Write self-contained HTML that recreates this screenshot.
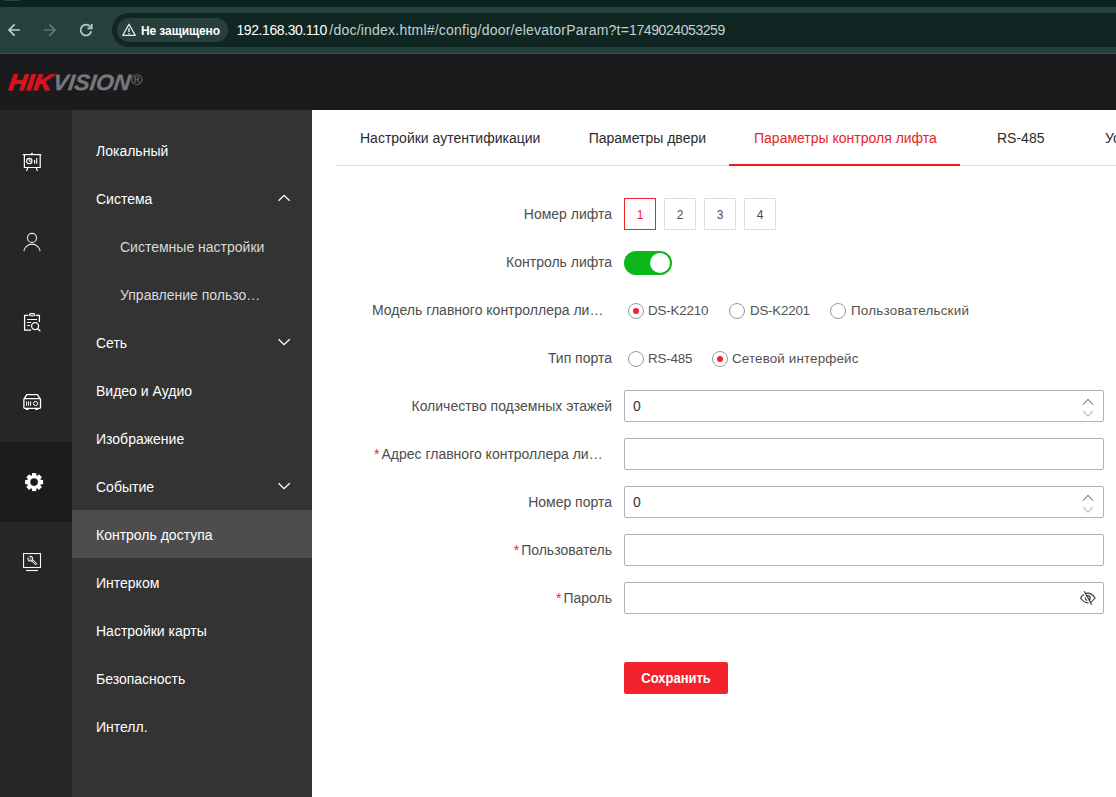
<!DOCTYPE html>
<html lang="ru">
<head>
<meta charset="utf-8">
<title>Параметры контроля лифта</title>
<style>
*{box-sizing:border-box;margin:0;padding:0}
html,body{width:1116px;height:797px;overflow:hidden;background:#fff}
body{position:relative;font-family:"Liberation Sans",Arial,sans-serif;font-size:14px;color:#4d4d4d}
.abs{position:absolute}
/* browser chrome */
#strip{left:0;top:0;width:1116px;height:7px;background:#0a2420}
#strip i{position:absolute;left:4px;top:0;width:16px;height:1px;background:#2a433e;border-radius:0 0 2px 2px}
#tb{left:0;top:7px;width:1116px;height:46px;background:#27403b}
#tbsep{left:0;top:53px;width:1116px;height:1px;background:#3e4b48}
#pill{left:112px;top:13px;width:1040px;height:34px;border-radius:17px;background:#0f2623}
#chip{left:117px;top:18px;width:111px;height:24px;border-radius:12px;background:#27403b}
#chiptxt{left:141px;top:19px;height:24px;line-height:24px;font-size:12px;font-weight:bold;color:#fff;white-space:nowrap;letter-spacing:-0.1px}
#url{left:236.500px;top:13px;height:34px;line-height:34px;font-size:14px;color:#c3d2ce;white-space:nowrap}
#url b{font-weight:normal;color:#fff;letter-spacing:-0.42px;margin-right:2.400px}
#url i{font-style:normal;letter-spacing:0.22px}
#url u{text-decoration:none;letter-spacing:-0.42px}
/* page header */
#hdr{left:0;top:54px;width:1116px;height:56px;background:#1b1b1d}
/* sidebar */
#sb1{left:0;top:110px;width:72px;height:687px;background:#262628}
#sb1act{left:0;top:442px;width:72px;height:80px;background:#1c1c1c}
#sb2{left:72px;top:110px;width:240px;height:687px;background:#333}
#sb2act{left:72px;top:510px;width:240px;height:48px;background:#4d4d4d}
.mi{position:absolute;left:96px;height:48px;line-height:48px;color:#fff;font-size:14px;white-space:nowrap}
.mi.sub{left:120px;color:#d9d9d9}
/* content */
#tabline{left:336px;top:165px;width:780px;height:1px;background:#e0e0e0}
.tab{position:absolute;top:126px;height:24px;line-height:24px;font-size:14px;color:#2b2b2b;white-space:nowrap}
.tab.on{color:#e72528}
#tabon{left:729px;top:164px;width:231px;height:2px;background:#f01b22}
.lbl{position:absolute;left:372px;width:240px;height:32px;line-height:32px;text-align:right;white-space:nowrap;color:#4d4d4d;font-size:14px}
.lbl.tr{text-align:left}
.lbl em{font-style:normal;color:#f0222c;margin-right:2px}
.nb{position:absolute;top:198px;width:32px;height:32px;border:1px solid #dcdcdc;border-radius:0;line-height:32px;text-align:center;font-size:12px;color:#4d4d4d;background:#fff}
.nb.on{border-color:#f0222c;color:#f0222c}
.inp{position:absolute;left:624px;width:480px;height:32px;border:1px solid #b3b3b3;border-radius:2px;background:#fff;line-height:30px;padding-left:8px;font-size:14px;color:#333}
.rd{position:absolute;width:16px;height:16px;border:1px solid #9a9a9a;border-radius:50%;background:#fff}
.rd.on::after{content:"";position:absolute;left:4px;top:4px;width:6px;height:6px;border-radius:50%;background:#f0222c}
.rl{position:absolute;height:20px;line-height:20px;font-size:13.4px;color:#525252;white-space:nowrap}
#tog{left:624px;top:251px;width:48px;height:24px;border-radius:12px;background:#0cb71a}
#tog i{position:absolute;left:26px;top:2px;width:20px;height:20px;border-radius:50%;background:#fff}
#btn{left:624px;top:662px;width:104px;height:32px;border-radius:2px;background:#f2222c;color:#fff;font-weight:bold;font-size:14.600px;line-height:32px;text-align:center;letter-spacing:0;white-space:nowrap;overflow:hidden}
#btn span{display:inline-block;transform:scaleX(0.890);transform-origin:50% 50%}
</style>
</head>
<body>
<!-- browser chrome -->
<div id="strip" class="abs"><i></i></div>
<div id="tb" class="abs"></div>
<div id="tbsep" class="abs"></div>
<svg class="abs" style="left:0;top:14px" width="110" height="32" viewBox="0 14 110 32" fill="none" stroke-width="1.7" stroke-linecap="butt" stroke-linejoin="miter">
  <path d="M19.8 30H9.2M14.6 24.4L9 30l5.6 5.6" stroke="#b7d1ca"/>
  <path d="M44.2 30h10.6M49.4 24.4L55 30l-5.6 5.600" stroke="#5e7a73"/>
  <path d="M90.400 26.900A5.400 5.400 0 1 0 91.300 31.200" stroke="#b7d1ca"/>
  <path d="M91.700 24v4.400h-4.200" stroke="#b7d1ca"/>
</svg>
<div id="pill" class="abs"></div>
<div id="chip" class="abs"></div>
<svg class="abs" style="left:121px;top:22px" width="16" height="16" viewBox="0 0 16 16" fill="none" stroke="#e6efec" stroke-width="1.3" stroke-linejoin="round">
  <path d="M8 2.300L14.200 13.300H1.800Z"/>
  <path d="M8 6.300v3.600M8 11v1.200" stroke-width="1.400"/>
</svg>
<div id="chiptxt" class="abs">Не защищено</div>
<div id="url" class="abs"><b>192.168.30.110</b><i>/doc/index.html#/config/door/elevatorParam?t=</i><u>1749024053259</u></div>

<!-- page header -->
<div id="hdr" class="abs"></div>
<svg class="abs" style="left:0;top:62px" width="160" height="40" viewBox="0 62 160 40">
  <g transform="translate(0 90) skewX(-7) translate(0 -90)" font-family="Liberation Sans, Arial, sans-serif" font-weight="bold" font-style="italic">
  <text x="8" y="90" font-size="22.300" fill="#d7141c" stroke="#d7141c" stroke-width="1" stroke-linejoin="miter" textLength="43" lengthAdjust="spacingAndGlyphs">HIK</text>
  <text x="52.200" y="90" font-size="22.300" fill="#77787b" stroke="#77787b" stroke-width="0.300" textLength="77.300" lengthAdjust="spacingAndGlyphs">VISION</text>
  </g>
  <text x="131" y="85.200" font-family="Liberation Sans, Arial, sans-serif" font-size="15.500" fill="#77787b">®</text>
</svg>

<!-- sidebar -->
<div id="sb1" class="abs"></div>
<div id="sb1act" class="abs"></div>
<div id="sb2" class="abs"></div>
<div id="sb2act" class="abs"></div>

<svg class="abs" style="left:0;top:110px" width="72" height="687" viewBox="0 110 72 687" fill="none" stroke="#fff" stroke-width="1.300">
  <!-- presentation board -->
  <g>
    <path d="M22.800 154.600h18.400" stroke-width="1.200"/>
    <path d="M31 153.600h2" stroke-width="1.400"/>
    <path d="M24.400 155v12.500h15.800v-12.500" stroke-width="1.200"/>
    <circle cx="29.300" cy="161.100" r="2.700" stroke-width="1.100"/>
    <path d="M29.300 158.800v2.400h2.300" stroke-width="0.900"/>
    <path d="M34.600 163.700v-3.800M36.700 163.700v-5.600" stroke-width="1.100"/>
    <path d="M27.700 168l-1 2.400M36.300 168l1 2.400" stroke-width="1.200" stroke-linecap="round"/>
  </g>
  <!-- user -->
  <g stroke="#e8e8e8" stroke-width="1.150">
    <circle cx="32" cy="237.900" r="4.500"/>
    <path d="M23.900 251.100A8.200 8.200 0 0 1 40.100 251.100"/>
  </g>
  <!-- clipboard search -->
  <g>
    <path d="M28.300 315.400h-3.700v14.800h6.600M35.800 315.400h3.600v6.600"/>
    <rect x="29.500" y="313.600" width="5.200" height="2.100" rx="1.050" stroke-width="1.100"/>
    <path d="M27.200 319.500h9.800M27.200 322.500h4M27.200 325.500h2.800" stroke-width="1.200"/>
    <circle cx="35.100" cy="326.100" r="3.500"/>
    <path d="M37.700 328.700l2.200 2.100" stroke-linecap="round"/>
  </g>
  <!-- device -->
  <g>
    <rect x="23.900" y="398.700" width="16.600" height="9.700" rx="0.800"/>
    <path d="M24.200 398.600l2.600-4h10.600l2.600 4"/>
    <path d="M26.600 401.400v4.400M28.600 401.400v4.400M30.600 401.400v4.400" stroke-width="1"/>
    <circle cx="35.600" cy="403.500" r="2.100" stroke-width="1"/>
    <path d="M26 409.300h2.600M35.400 409.300h2.600" stroke-width="1.200"/>
  </g>
  <!-- gear -->
  <g stroke="none" fill="#fff" transform="translate(34.100 482.100)">
    <g id="teeth">
      <rect x="-2.150" y="-9" width="4.300" height="18"/>
      <rect x="-9" y="-2.150" width="18" height="4.300"/>
      <rect x="-2.150" y="-9" width="4.300" height="18" transform="rotate(45)"/>
      <rect x="-9" y="-2.150" width="18" height="4.300" transform="rotate(45)"/>
    </g>
    <circle r="7"/>
    <circle r="3.800" fill="#1c1c1c"/>
  </g>
  <!-- monitor wrench -->
  <g stroke="#f4f4f4">
    <rect x="23.550" y="553.550" width="16.950" height="13.950" stroke-width="1.100"/>
    <path d="M26 570.500h12" stroke-width="1.200"/>
    <path d="M32.300 560.500l3.600 3.300" stroke-width="2.400" stroke-linecap="round" stroke="#e0e0e0"/>
    <path d="M32.600 560.800l3.100 2.800" stroke="#262628" stroke-width="0.800" stroke-linecap="round"/>
    <circle cx="30.300" cy="558.700" r="2.300" stroke-width="1.100" stroke="#e6e6e6"/>
    <path d="M30.300 558.700l-2.300-2.500" stroke="#262628" stroke-width="1.300"/>
    <path d="M29.600 559.500l1.500-1.700" stroke-width="0.800"/>
  </g>
</svg>

<div class="mi" style="top:127px">Локальный</div>
<div class="mi" style="top:175px">Система</div>
<div class="mi sub" style="top:223px">Системные настройки</div>
<div class="mi sub" style="top:271px">Управление пользо…</div>
<div class="mi" style="top:319px">Сеть</div>
<div class="mi" style="top:367px">Видео и Аудио</div>
<div class="mi" style="top:415px">Изображение</div>
<div class="mi" style="top:463px">Событие</div>
<div class="mi" style="top:511px">Контроль доступа</div>
<div class="mi" style="top:559px">Интерком</div>
<div class="mi" style="top:607px">Настройки карты</div>
<div class="mi" style="top:655px">Безопасность</div>
<div class="mi" style="top:703px">Интелл.</div>
<svg class="abs" style="left:272px;top:180px" width="24" height="330" viewBox="272 180 24 330" fill="none" stroke="#fff" stroke-width="1.300">
  <path d="M278.500 200.700l5.600-5.400 5.600 5.400"/>
  <path d="M278.500 339.300l5.600 5.400 5.600-5.400"/>
  <path d="M278.500 483.300l5.600 5.400 5.600-5.400"/>
</svg>

<!-- tabs -->
<div id="tabline" class="abs"></div>
<div id="tabon" class="abs"></div>
<div class="tab" style="left:360px">Настройки аутентификации</div>
<div class="tab" style="left:588.700px">Параметры двери</div>
<div class="tab on" style="left:754px">Параметры контроля лифта</div>
<div class="tab" style="left:997px">RS-485</div>
<div class="tab" style="left:1105px">Установка</div>

<!-- form -->
<div class="lbl" style="top:198px">Номер лифта</div>
<div class="nb on" style="left:624px">1</div>
<div class="nb" style="left:664px">2</div>
<div class="nb" style="left:704px">3</div>
<div class="nb" style="left:744px">4</div>

<div class="lbl" style="top:246px">Контроль лифта</div>
<div id="tog" class="abs"><i></i></div>

<div class="lbl tr" style="top:294px">Модель главного контроллера ли…</div>
<div class="rd on" style="left:628px;top:303px"></div><div class="rl" style="left:648px;top:301px;letter-spacing:-0.200px">DS-K2210</div>
<div class="rd" style="left:729px;top:303px"></div><div class="rl" style="left:750px;top:301px;letter-spacing:-0.250px">DS-K2201</div>
<div class="rd" style="left:830px;top:303px"></div><div class="rl" style="left:851px;top:301px;letter-spacing:0.230px">Пользовательский</div>

<div class="lbl" style="top:342px">Тип порта</div>
<div class="rd" style="left:628px;top:351px"></div><div class="rl" style="left:648px;top:349px;letter-spacing:-0.200px">RS-485</div>
<div class="rd on" style="left:712px;top:351px"></div><div class="rl" style="left:732px;top:349px;letter-spacing:0.140px">Сетевой интерфейс</div>

<div class="lbl" style="top:390px">Количество подземных этажей</div>
<div class="inp" style="top:390px">0</div>
<div class="lbl tr" style="top:438px;padding-left:2px"><em>*</em>Адрес главного контроллера ли…</div>
<div class="inp" style="top:438px"></div>
<div class="lbl" style="top:486px">Номер порта</div>
<div class="inp" style="top:486px">0</div>
<div class="lbl" style="top:534px"><em>*</em>Пользователь</div>
<div class="inp" style="top:534px"></div>
<div class="lbl" style="top:582px"><em>*</em>Пароль</div>
<div class="inp" style="top:582px"></div>

<svg class="abs" style="left:1076px;top:390px" width="24" height="128" viewBox="1076 390 24 128" fill="none" stroke-width="1">
  <path d="M1083 404.700l5-5.400 5 5.400" stroke="#444" stroke-width="1"/>
  <path d="M1083 411l5 5.200 5-5.200" stroke="#bcbcbc" stroke-width="1.100"/>
  <path d="M1083 500.700l5-5.400 5 5.400" stroke="#444" stroke-width="1"/>
  <path d="M1083 507l5 5.200 5-5.200" stroke="#bcbcbc" stroke-width="1.100"/>
</svg>
<svg class="abs" style="left:1076px;top:586px" width="24" height="24" viewBox="1076 586 24 24" fill="none" stroke="#3c3c3c" stroke-width="1.200">
  <path d="M1080.500 598Q1084 593.200 1087.800 593.200Q1091.600 593.200 1095.100 598Q1091.600 602.800 1087.800 602.800Q1084 602.800 1080.500 598Z"/>
  <circle cx="1087.800" cy="598" r="2.400"/>
  <path d="M1083.200 591.800l7.600 13.400" stroke="#fff" stroke-width="1.600"/>
  <path d="M1084.200 591.200l7.600 13.400" stroke-width="1.150"/>
</svg>

<div id="btn" class="abs"><span>Сохранить</span></div>
</body>
</html>
